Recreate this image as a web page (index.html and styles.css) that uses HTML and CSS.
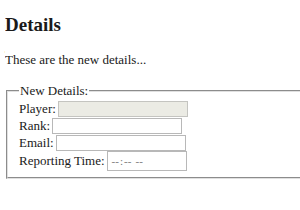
FILE: index.html
```html
<!DOCTYPE html>
<html lang="en">
<head>
    <meta charset="UTF-8">
    <title>Details</title>
    <link rel="stylesheet" href="styles.css">
</head>
<body>

    <h2 class="title">Details</h2>
    <p class="intro">These are the new details...</p>

    <fieldset class="details-box">
        <legend>New Details:</legend>

        <div class="field-row">
            <label>Player:</label><input type="text" class="field-input" disabled>
        </div>
        <div class="field-row">
            <label>Rank:</label><input type="text" class="field-input">
        </div>
        <div class="field-row">
            <label>Email:</label><input type="text" class="field-input">
        </div>
        <div class="field-row">
            <label>Reporting Time:</label><input type="time" class="field-input time-input">
        </div>
    </fieldset>

</body>
</html>
```

FILE: styles.css
```css
body {
    margin: 5px 0 5px 5px;
    font-family: "Liberation Serif", "Times New Roman", serif;
    font-size: 13px;
    color: #1a1a1a;
}

.title {
    font-size: 19px;
    margin: 9px 0 0 0;
    line-height: 22px;
}

.intro {
    margin: 16px 0 0 0;
    line-height: 15px;
}

.details-box {
    margin: 16px 0 0 1px;
    padding: 2px 10px 6px 11px;
    border: 2px groove #e0e0e0;
    border-right: none;
}

.details-box legend {
    padding: 0 1px;
    line-height: 15px;
}

.field-row {
    display: flex;
    align-items: center;
    min-height: 17px;
}

.field-row label {
    margin-right: 2px;
}

.field-input {
    width: 130px;
    height: 16px;
    box-sizing: border-box;
    border: 1px solid #b8b8b8;
    padding: 0 3px;
    font-family: "Liberation Serif", serif;
    font-size: 11px;
    background: #fff;
}

.field-input:disabled {
    background: #ebebe4;
    border-color: #c4c4c0;
}

.time-input {
    width: 80px;
    height: 20px;
    color: #777;
    letter-spacing: 1px;
}

.time-input::-webkit-calendar-picker-indicator {
    display: none;
}
```
